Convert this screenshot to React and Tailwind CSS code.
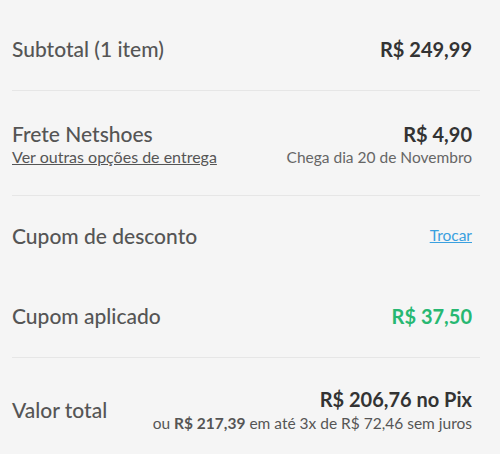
export default function App() {
  const font = { fontFamily: 'Lato, "Liberation Sans", sans-serif' };
  return (
    <div className="w-[500px] h-[454px] bg-[#f5f5f5] overflow-hidden" style={font}>
      <div className="ml-[12px] w-[468px]">
        <div className="h-[90px] pt-2 pr-2 flex items-center justify-between">
          <span className="text-[21px] font-medium text-[#555]">Subtotal (1 item)</span>
          <span className="text-[20px] font-bold text-[#333]">R$ 249,99</span>
        </div>
        <div className="h-px bg-[#e6e6e6]" />
        <div className="h-[104px] pt-1 pr-2 flex items-center justify-between">
          <div className="flex flex-col">
            <span className="text-[21px] font-medium text-[#555] leading-[24px]">Frete Netshoes</span>
            <span className="text-[16px] text-[#555] underline leading-[22px]">Ver outras opções de entrega</span>
          </div>
          <div className="flex flex-col items-end">
            <span className="text-[20px] font-bold text-[#333] leading-[24px]">R$ 4,90</span>
            <span className="text-[15.5px] text-[#666] leading-[22px]">Chega dia 20 de Novembro</span>
          </div>
        </div>
        <div className="h-px bg-[#e6e6e6]" />
        <div className="h-[80px] pr-2 flex items-center justify-between">
          <span className="text-[21px] font-medium text-[#555]">Cupom de desconto</span>
          <span className="text-[15.5px] text-[#3aa0df] underline">Trocar</span>
        </div>
        <div className="h-[80px] pr-2 flex items-center justify-between">
          <span className="text-[21px] font-medium text-[#555]">Cupom aplicado</span>
          <span className="text-[20px] font-bold text-[#27b872]">R$ 37,50</span>
        </div>
        <div className="h-px bg-[#e6e6e6] mt-[1px]" />
        <div className="h-[95px] pr-2 flex items-center justify-between">
          <span className="text-[21px] font-medium text-[#555] pt-[8px]">Valor total</span>
          <div className="flex flex-col items-end pt-[10px]">
            <span className="text-[20px] font-bold text-[#333] leading-[24px]">R$ 206,76 no Pix</span>
            <span className="text-[15.5px] text-[#555] leading-[24px]">
              ou <span className="font-bold">R$ 217,39</span> em até 3x de R$ 72,46 sem juros
            </span>
          </div>
        </div>
      </div>
    </div>
  );
}
